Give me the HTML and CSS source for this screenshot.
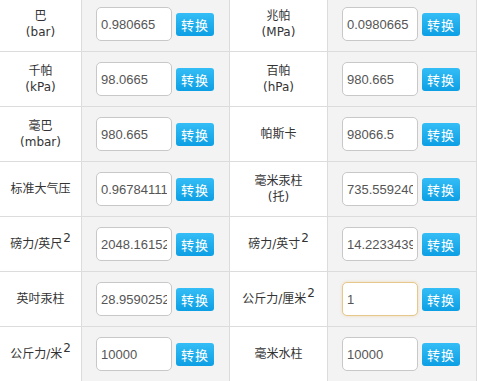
FILE: index.html
```html
<!DOCTYPE html>
<html lang="zh-CN">

<head>
    <meta charset="UTF-8">
    <title>压力单位换算</title>
    <link rel="stylesheet" href="styles.css">
</head>

<body>

    <div class="converter">
        <div class="unit"><span>巴</span><span>(bar)</span></div>
        <div class="field"><input type="text" value="0.980665"><button>转换</button></div>
        <div class="unit"><span>兆帕</span><span>(MPa)</span></div>
        <div class="field"><input type="text" value="0.0980665"><button>转换</button></div>

        <div class="unit"><span>千帕</span><span>(kPa)</span></div>
        <div class="field"><input type="text" value="98.0665"><button>转换</button></div>
        <div class="unit"><span>百帕</span><span>(hPa)</span></div>
        <div class="field"><input type="text" value="980.665"><button>转换</button></div>

        <div class="unit"><span>毫巴</span><span>(mbar)</span></div>
        <div class="field"><input type="text" value="980.665"><button>转换</button></div>
        <div class="unit"><span>帕斯卡</span></div>
        <div class="field"><input type="text" value="98066.5"><button>转换</button></div>

        <div class="unit"><span>标准大气压</span></div>
        <div class="field"><input type="text" value="0.96784111"><button>转换</button></div>
        <div class="unit"><span>毫米汞柱</span><span>(托)</span></div>
        <div class="field"><input type="text" value="735.55924006"><button>转换</button></div>

        <div class="unit"><span>磅力/英尺<sup>2</sup></span></div>
        <div class="field"><input type="text" value="2048.1615232"><button>转换</button></div>
        <div class="unit"><span>磅力/英寸<sup>2</sup></span></div>
        <div class="field"><input type="text" value="14.22334391"><button>转换</button></div>

        <div class="unit"><span>英吋汞柱</span></div>
        <div class="field"><input type="text" value="28.9590252"><button>转换</button></div>
        <div class="unit"><span>公斤力/厘米<sup>2</sup></span></div>
        <div class="field"><input type="text" class="active" value="1"><button>转换</button></div>

        <div class="unit"><span>公斤力/米<sup>2</sup></span></div>
        <div class="field"><input type="text" value="10000"><button>转换</button></div>
        <div class="unit"><span>毫米水柱</span></div>
        <div class="field"><input type="text" value="10000"><button>转换</button></div>
    </div>

</body>

</html>
```

FILE: styles.css
```css
body {
    margin: 0;
    background: #fff;
    font-family: "DejaVu Sans", "Noto Sans CJK SC", sans-serif;
    overflow: hidden;
}

.converter {
    display: grid;
    grid-template-columns: 81px 147px 97px 148px;
    grid-auto-rows: 54px;
    gap: 1px;
    width: 476px;
    margin-top: -3px;
    background: #dcdcdc;
    border-right: 1px solid #dcdcdc;
    border-bottom: 1px solid #dcdcdc;
}

.unit {
    display: flex;
    flex-direction: column;
    align-items: center;
    justify-content: center;
    background: #fff;
    color: #333;
    font-size: 12px;
    line-height: 16px;
}

.unit span {
    display: block;
    white-space: nowrap;
}

.unit sup {
    font-size: 12px;
    line-height: 0;
    vertical-align: 6px;
    margin-left: 1px;
}

.field {
    display: flex;
    align-items: center;
    gap: 4px;
    padding-left: 14px;
    background: #f3f3f3;
}

.field input {
    box-sizing: border-box;
    width: 76px;
    height: 34px;
    padding: 0 4px;
    border: 1px solid #c8c8c8;
    border-radius: 5px;
    background: #fff;
    color: #555;
    font-family: "Liberation Sans", sans-serif;
    font-size: 13px;
    outline: none;
}

.field input.active {
    border-color: #e6c78c;
    box-shadow: 0 0 3px rgba(230, 199, 140, 0.6);
}

.field button {
    width: 38px;
    height: 23px;
    padding: 0;
    border: none;
    border-radius: 3px;
    background: linear-gradient(#34bdf6, #0d9fe4);
    color: #fff;
    font-family: "Noto Sans CJK SC", sans-serif;
    font-size: 13px;
    letter-spacing: 1px;
    cursor: pointer;
}
```
